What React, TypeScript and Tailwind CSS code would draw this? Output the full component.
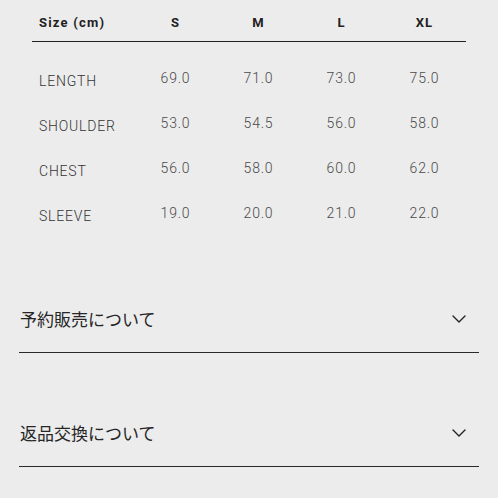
import React from "react";

const sizes = ["S", "M", "L", "XL"];
const rows: { label: string; values: string[] }[] = [
  { label: "LENGTH", values: ["69.0", "71.0", "73.0", "75.0"] },
  { label: "SHOULDER", values: ["53.0", "54.5", "56.0", "58.0"] },
  { label: "CHEST", values: ["56.0", "58.0", "60.0", "62.0"] },
  { label: "SLEEVE", values: ["19.0", "20.0", "21.0", "22.0"] },
];

function Chevron() {
  return (
    <svg width="14" height="8" viewBox="0 0 14 8" fill="none">
      <path d="M1 1l6 6 6-6" stroke="#222" strokeWidth="1.4" strokeLinecap="round" strokeLinejoin="round" />
    </svg>
  );
}

function AccordionItem({ title }: { title: string }) {
  return (
    <div className="border-b border-[#2a2a2a]">
      <div className="flex h-[63px] items-center justify-between pl-[1px] pr-[13px] pb-[4px]">
        <span
          className="text-[17px] text-[#262626]"
          style={{ fontFamily: '"Noto Sans CJK JP", "Noto Sans", sans-serif' }}
        >
          {title}
        </span>
        <Chevron />
      </div>
    </div>
  );
}

export default function App() {
  return (
    <div
      className="w-[498px] h-[498px] bg-[#ececec] overflow-hidden"
      style={{ fontFamily: 'Roboto, "Noto Sans", sans-serif' }}
    >
      <div className="ml-[32px] w-[434px]">
        <div className="grid grid-cols-[102px_repeat(4,83px)] h-[42px] items-center border-b border-[#222] pt-[4px]">
          <div className="pl-[7px] text-[13px] font-bold tracking-[1.2px] text-[#222]">Size (cm)</div>
          {sizes.map((s) => (
            <div key={s} className="text-center text-[13px] font-bold tracking-[1px] text-[#222]">
              {s}
            </div>
          ))}
        </div>
        <div className="pt-[15px]">
          {rows.map((r) => (
            <div key={r.label} className="grid grid-cols-[102px_repeat(4,83px)] h-[45px] items-center">
              <div className="pl-[7px] pt-[3px] text-[14px] font-light tracking-[0.8px] text-[#333]">{r.label}</div>
              {r.values.map((v, i) => (
                <div key={i} className="text-center text-[14px] font-light tracking-[0.8px] text-[#4a4a4a] pb-[3px]">
                  {v}
                </div>
              ))}
            </div>
          ))}
        </div>
      </div>
      <div className="ml-[19px] w-[460px] mt-[52px] flex flex-col gap-[50px]">
        <AccordionItem title="予約販売について" />
        <AccordionItem title="返品交換について" />
      </div>
    </div>
  );
}
